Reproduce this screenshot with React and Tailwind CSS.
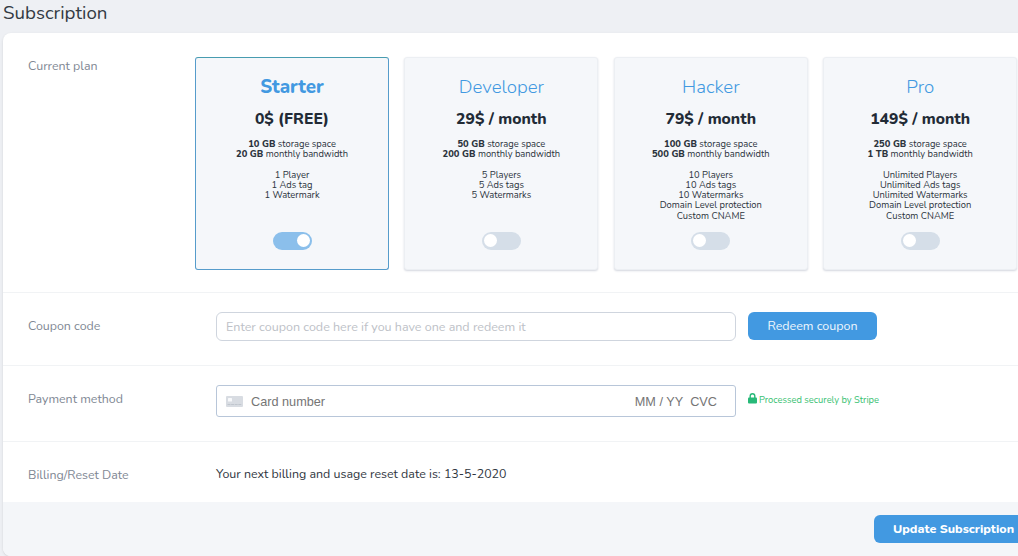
import { useState } from 'react';
import clsx from 'clsx';

const plans = [
  {
    name: 'Starter',
    price: '0$ (FREE)',
    storage: '10 GB',
    bandwidth: '20 GB',
    features: ['1 Player', '1 Ads tag', '1 Watermark'],
  },
  {
    name: 'Developer',
    price: '29$ / month',
    storage: '50 GB',
    bandwidth: '200 GB',
    features: ['5 Players', '5 Ads tags', '5 Watermarks'],
  },
  {
    name: 'Hacker',
    price: '79$ / month',
    storage: '100 GB',
    bandwidth: '500 GB',
    features: ['10 Players', '10 Ads tags', '10 Watermarks', 'Domain Level protection', 'Custom CNAME'],
  },
  {
    name: 'Pro',
    price: '149$ / month',
    storage: '250 GB',
    bandwidth: '1 TB',
    features: ['Unlimited Players', 'Unlimited Ads tags', 'Unlimited Watermarks', 'Domain Level protection', 'Custom CNAME'],
  },
];

const Toggle = ({ checked, onChange, label }) => (
  <button
    type="button"
    role="switch"
    aria-checked={checked}
    aria-label={label}
    onClick={onChange}
    className={clsx(
      'flex h-[18px] w-[39px] items-center rounded-full px-[2px]',
      checked ? 'justify-end bg-[#8bbfeb]' : 'justify-start bg-[#d5dee8]'
    )}
  >
    <span className="h-[13px] w-[13px] rounded-full bg-white" />
  </button>
);

const PlanCard = ({ plan, selected, onSelect }) => (
  <div
    className={clsx(
      'flex h-[213px] w-[194px] shrink-0 flex-col items-center rounded-[3px] border bg-[#f5f7fa] text-[#2b333c]',
      selected
        ? 'border-[#569ccb] border-t-[#489cb0]'
        : 'border-[#eceff3] shadow-[0_1px_2px_rgba(60,75,110,0.22)]'
    )}
  >
    <h2
      className={clsx(
        'mt-[17px] text-[18.72px] leading-6 text-[#4299e1]',
        selected ? 'font-extrabold' : 'font-light'
      )}
    >
      {plan.name}
    </h2>
    <p className="mt-[9px] text-[15.7px] leading-[22px] font-extrabold text-[#222b36]">
      {plan.price}
    </p>
    <div className="mt-[9px] text-center text-[9.36px] leading-[10.25px]">
      <p><b className="font-extrabold">{plan.storage}</b> storage space</p>
      <p><b className="font-extrabold">{plan.bandwidth}</b> monthly bandwidth</p>
    </div>
    <ul className="mt-[10px] h-[52px] text-center text-[9.36px] leading-[10.25px]">
      {plan.features.map((feature) => (
        <li key={feature}>{feature}</li>
      ))}
    </ul>
    <div className="mt-[10px]">
      <Toggle checked={selected} onChange={onSelect} label={plan.name} />
    </div>
  </div>
);

const CardIcon = () => (
  <svg width="17" height="11" viewBox="0 0 17 11" className="shrink-0">
    <rect width="17" height="11" rx="1" fill="#d8dce2" />
    <rect x="2" y="2" width="4" height="3.5" rx="0.5" fill="#f8f9fb" />
    <path d="M1.5 8.5h14" stroke="#c0c6ce" strokeWidth="1" strokeDasharray="3 0.6" />
  </svg>
);

const LockIcon = () => (
  <svg width="9" height="11" viewBox="0 0 9 11" className="mb-px shrink-0">
    <path d="M2.2 5V3a2.3 2.3 0 0 1 4.6 0v2" fill="none" stroke="#27b978" strokeWidth="1.4" />
    <rect y="4.4" width="9" height="6.2" rx="1" fill="#27b978" />
  </svg>
);

const Label = ({ children, className }) => (
  <div className={clsx('shrink-0 pl-[25px] text-[12.4px] leading-5 text-[#7f8894]', className)}>
    {children}
  </div>
);

export default function App() {
  const [selectedPlan, setSelectedPlan] = useState('Starter');
  const [coupon, setCoupon] = useState('');

  return (
    <div className="h-[556px] w-[1018px] overflow-hidden bg-[#eef0f4] pl-[3px] font-[Nunito,Lato,sans-serif]">
      <h1 className="h-[33px] pt-px text-[18.72px] leading-6 text-[#333a43]">Subscription</h1>

      <div className="w-[1040px] overflow-hidden rounded-lg bg-white shadow-sm">
        {/* Current plan */}
        <section className="flex h-[260px] border-b border-[#f1f3f5] pt-[24px]">
          <Label className="-mt-px w-[192px]">Current plan</Label>
          <div className="flex gap-[15.4px]">
            {plans.map((plan) => (
              <PlanCard
                key={plan.name}
                plan={plan}
                selected={selectedPlan === plan.name}
                onSelect={() => setSelectedPlan(plan.name)}
              />
            ))}
          </div>
        </section>

        {/* Coupon code */}
        <section className="flex h-[73px] items-center border-b border-[#f1f3f5] pb-[6px]">
          <Label className="w-[213px]">Coupon code</Label>
          <input
            value={coupon}
            onChange={(e) => setCoupon(e.target.value)}
            placeholder="Enter coupon code here if you have one and redeem it"
            className="h-[29px] w-[520px] rounded-md border border-[#cfd5de] px-[9px] text-[12.5px] outline-none placeholder:text-[#bdc1c7]"
          />
          <button className="ml-[12px] h-[28px] w-[129px] rounded-md bg-[#4299e1] text-[12.48px] text-[#f0f7fd]">
            Redeem coupon
          </button>
        </section>

        {/* Payment method */}
        <section className="flex h-[76px] items-center border-b border-[#f1f3f5] pb-[5px]">
          <Label className="w-[213px] pb-[4px]">Payment method</Label>
          <div className="flex h-[32px] w-[520px] items-center rounded-[3px] border border-[#b8c6d9] pr-[18px] pl-[9px] font-['Liberation_Sans',sans-serif] text-[12.7px] text-[#757575]">
            <CardIcon />
            <span className="ml-[8px] grow pt-[3px]">Card number</span>
            <span className="pt-[3px]">MM / YY</span>
            <span className="ml-[7px] pt-[3px]">CVC</span>
          </div>
          <div className="ml-[12px] flex items-center gap-[2px] pb-[4px] text-[9.36px] text-[#38c172]">
            <LockIcon />
            <span className="pt-[2px]">Processed securely by Stripe</span>
          </div>
        </section>

        {/* Billing date */}
        <section className="flex h-[60px] items-center">
          <Label className="w-[213px] pt-[6px]">Billing/Reset Date</Label>
          <p className="pt-[4px] text-[12.42px] text-[#2f363e]">Your next billing and usage reset date is: 13-5-2020</p>
        </section>

        <footer className="flex h-[54px] bg-[#f4f6f9] pt-[13px] pl-[871px]">
          <button className="h-[28px] w-[161px] shrink-0 rounded-md bg-[#4299e1] pl-[19px] text-left text-[12.48px] font-extrabold whitespace-nowrap text-white">
            Update Subscription
          </button>
        </footer>
      </div>
    </div>
  );
}
